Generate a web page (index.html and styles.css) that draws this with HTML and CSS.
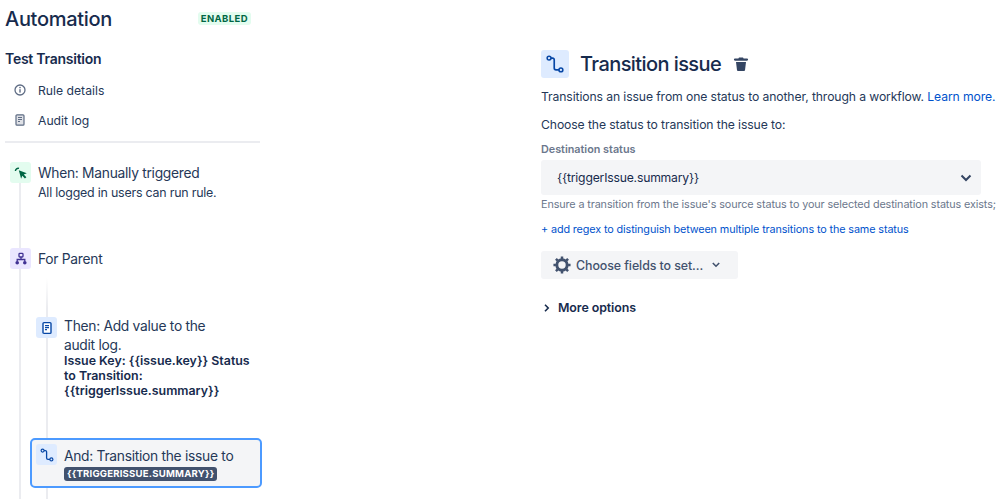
FILE: index.html
```html
<!DOCTYPE html>
<html lang="en">
<head>
    <meta charset="UTF-8">
    <title>Automation</title>
    <link rel="stylesheet" href="styles.css">
</head>
<body>
    <div class="page">
        <div class="sidebar">
            <div class="sidebar-head">
                <h1>Automation</h1>
                <span class="lozenge">ENABLED</span>
            </div>
            <h2>Test Transition</h2>
            <div class="nav-item">
                <svg class="nav-icon" viewBox="0 0 14 14"><circle cx="7" cy="7" r="5" fill="none" stroke="#5e6c84" stroke-width="1.3"/><rect x="6.3" y="6.2" width="1.4" height="3.4" fill="#5e6c84"/><circle cx="7" cy="4.6" r="0.8" fill="#5e6c84"/></svg>
                <span>Rule details</span>
            </div>
            <div class="nav-item">
                <svg class="nav-icon" viewBox="0 0 14 14"><rect x="3" y="1.8" width="8" height="10.4" rx="1" fill="#dfe1e6" stroke="#5e6c84" stroke-width="1.2"/><path d="M5 4.5h4M5 6.5h4M5 8.5h2" stroke="#5e6c84" stroke-width="1"/></svg>
                <span>Audit log</span>
            </div>
            <div class="divider"></div>

            <div class="timeline">
                <div class="step step-when">
                    <div class="step-icon icon-green">
                        <svg viewBox="0 0 14 14" width="14" height="14"><path d="M4.8 4.2l8 3-3 1.2 2.6 2.8-1.5 1.4-2.6-2.8-1.2 3z" fill="#006644"/><path d="M1.4 5a2.8 2.8 0 0 1 3.6-2.6" fill="none" stroke="#006644" stroke-width="1.4"/></svg>
                    </div>
                    <div class="step-text">
                        <div class="step-title">When: Manually triggered</div>
                        <div class="step-sub">All logged in users can run rule.</div>
                    </div>
                </div>

                <div class="step step-for">
                    <div class="step-icon icon-purple">
                        <svg viewBox="0 0 14 14" width="14" height="14"><rect x="5" y="1.4" width="4" height="3.6" rx="0.8" fill="none" stroke="#403294" stroke-width="1.3"/><path d="M7 5v2.5M3.2 9.4V7.5h7.6v1.9" fill="none" stroke="#403294" stroke-width="1.3"/><circle cx="3.2" cy="10.8" r="1.8" fill="#403294"/><circle cx="10.8" cy="10.8" r="1.8" fill="#403294"/></svg>
                    </div>
                    <div class="step-title">For Parent</div>
                </div>

                <div class="branch">
                    <div class="step step-then">
                        <div class="step-icon icon-blue">
                            <svg viewBox="0 0 14 14" width="14" height="14"><rect x="3" y="1.6" width="8" height="10.8" rx="1" fill="#fff" stroke="#0747a6" stroke-width="1.4"/><path d="M5 4.6h4M5 6.6h4M5 8.6h2" stroke="#0747a6" stroke-width="1.1"/></svg>
                        </div>
                        <div class="step-text">
                            <div class="step-title">Then: Add value to the audit log.</div>
                            <div class="step-bold">Issue Key: {{issue.key}} Status to Transition: {{triggerIssue.summary}}</div>
                        </div>
                    </div>

                    <div class="step step-and">
                        <div class="step-icon icon-blue">
                            <svg viewBox="0 0 14 14" width="14" height="14"><circle cx="2.6" cy="2.6" r="1.5" fill="none" stroke="#0747a6" stroke-width="1.2"/><circle cx="11.4" cy="11.4" r="1.5" fill="none" stroke="#0747a6" stroke-width="1.2"/><path d="M4 2.6h1.4a1.2 1.2 0 0 1 1.2 1.2v6.2a1.4 1.4 0 0 0 1.4 1.4h2" fill="none" stroke="#0747a6" stroke-width="1.3"/></svg>
                        </div>
                        <div class="step-text">
                            <div class="step-title">And: Transition the issue to</div>
                            <div class="tag">{{TRIGGERISSUE.SUMMARY}}</div>
                        </div>
                    </div>
                </div>
            </div>
        </div>

        <div class="content">
            <div class="content-head">
                <div class="head-icon">
                    <svg viewBox="0 0 14 14" width="18" height="18"><circle cx="2.4" cy="2.4" r="1.5" fill="none" stroke="#0747a6" stroke-width="1.2"/><circle cx="11.6" cy="11.6" r="1.5" fill="none" stroke="#0747a6" stroke-width="1.2"/><path d="M3.9 2.4h1.3a1.2 1.2 0 0 1 1.2 1.2v6.6a1.4 1.4 0 0 0 1.4 1.4h2.3" fill="none" stroke="#0747a6" stroke-width="1.3"/></svg>
                </div>
                <h2 class="content-title">Transition issue</h2>
                <svg class="trash" viewBox="0 0 16 16" width="16" height="16"><path d="M6 1.5h4l.6 1H14a.7.7 0 0 1 0 2.2H2a.7.7 0 0 1 0-2.2h3.4z" fill="#344563"/><path d="M3 6h10l-1 8.2a1 1 0 0 1-1 .8H5a1 1 0 0 1-1-.8z" fill="#344563"/></svg>
            </div>
            <p class="desc">Transitions an issue from one status to another, through a workflow. <a href="#">Learn more.</a></p>
            <p class="desc choose">Choose the status to transition the issue to:</p>
            <div class="field-label">Destination status</div>
            <div class="select">
                <span>{{triggerIssue.summary}}</span>
                <svg viewBox="0 0 12 8" width="12" height="8"><path d="M1.5 1.5L6 6l4.5-4.5" fill="none" stroke="#344563" stroke-width="2"/></svg>
            </div>
            <div class="hint">Ensure a transition from the issue's source status to your selected destination status exists;</div>
            <a class="regex" href="#">+ add regex to distinguish between multiple transitions to the same status</a>
            <div class="fields-btn">
                <svg viewBox="0 0 16 16" width="18" height="18"><circle cx="8" cy="8" r="4.6" fill="none" stroke="#42526e" stroke-width="2.6"/><path d="M8 .4v2.2M8 13.4v2.2M.4 8h2.2M13.4 8h2.2M2.6 2.6l1.6 1.6M11.8 11.8l1.6 1.6M2.6 13.4l1.6-1.6M11.8 4.2l1.6-1.6" stroke="#42526e" stroke-width="2.2"/></svg>
                <span>Choose fields to set...</span>
                <svg viewBox="0 0 10 7" width="8" height="6"><path d="M1 1l4 4 4-4" fill="none" stroke="#42526e" stroke-width="2"/></svg>
            </div>
            <div class="more">
                <svg viewBox="0 0 7 10" width="6" height="8"><path d="M1 1l4 4-4 4" fill="none" stroke="#172b4d" stroke-width="2"/></svg>
                <span>More options</span>
            </div>
        </div>
    </div>
</body>
</html>
```
FILE: styles.css
```css
/* General styles */
body {
    font-family: Inter, "Liberation Sans", sans-serif;
    margin: 0;
    padding: 0;
    background-color: #fff;
    color: #172b4d;
}

.page {
    display: flex;
    height: 499px;
    overflow: hidden;
}

/* Sidebar */
.sidebar {
    width: 255px;
    flex-shrink: 0;
    padding-left: 5px;
}

.sidebar-head {
    display: flex;
    align-items: center;
    justify-content: space-between;
    width: 246px;
    height: 38px;
}

.sidebar-head h1 {
    margin: 0;
    font-size: 20px;
    font-weight: 500;
    letter-spacing: -0.3px;
}

.lozenge {
    background: #e3fcef;
    color: #006644;
    font-size: 9.5px;
    font-weight: 700;
    letter-spacing: 0.4px;
    padding: 1px 3px 0;
    margin-bottom: 1px;
    border-radius: 3px;
    line-height: 12px;
}

.sidebar h2 {
    margin: 11px 0 6px;
    font-size: 14px;
    font-weight: 600;
    letter-spacing: -0.25px;
    line-height: 20px;
}

.nav-item {
    display: flex;
    align-items: center;
    gap: 11px;
    height: 30px;
    font-size: 12.2px;
    color: #253858;
    padding-left: 8px;
}

.nav-icon {
    width: 14px;
    height: 14px;
}

.divider {
    height: 2px;
    background: #ebecf0;
    margin-top: 6px;
}

/* Timeline */
.timeline {
    position: relative;
    padding-top: 19px;
}

.timeline::before {
    content: "";
    position: absolute;
    left: 14px;
    top: 30px;
    bottom: -200px;
    width: 2px;
    background: #ebecf0;
}

.step {
    position: relative;
    display: flex;
    gap: 7px;
}

.step-icon {
    width: 21px;
    height: 21px;
    flex-shrink: 0;
    display: flex;
    align-items: center;
    justify-content: center;
    border-radius: 3px;
}

.icon-green {
    background: #e3fcef;
}

.icon-purple {
    background: #eae6ff;
}

.icon-blue {
    background: #deebff;
}

.step-when,
.step-for {
    margin-left: 5px;
}

.step-when .step-text {
    padding-top: 1px;
}

.step-for {
    margin-top: 47px;
    align-items: center;
}

.step-title {
    font-size: 13.8px;
    letter-spacing: -0.28px;
    line-height: 20px;
    color: #253858;
}

.step-sub {
    font-size: 12.4px;
    letter-spacing: -0.2px;
    line-height: 17px;
    margin-top: 1px;
    color: #253858;
}

.step-bold {
    font-size: 12.4px;
    font-weight: 600;
    line-height: 15px;
    margin-top: -2px;
}

/* Nested actions */
.branch {
    position: relative;
    margin-left: 25px;
    padding-top: 48px;
}

.branch::before {
    content: "";
    position: absolute;
    left: 16px;
    top: 9px;
    bottom: -40px;
    width: 2px;
    background: linear-gradient(#fff, #ebecf0 30px);
}

.step-then {
    padding-left: 6px;
    width: 215px;
}

.step-then .step-title {
    line-height: 19px;
    max-width: 165px;
}

.step-and {
    margin-top: 40px;
    width: 232px;
    height: 50px;
    box-sizing: border-box;
    padding: 4px 4px;
    background: #f4f5f7;
    border: 2px solid #4c9aff;
    border-radius: 5px;
}

.step-and .step-text {
    padding-top: 2px;
}

.tag {
    width: fit-content;
    margin-top: 1px;
    background: #42526e;
    color: #fff;
    font-size: 9.6px;
    font-weight: 700;
    letter-spacing: 0.2px;
    line-height: 14px;
    padding: 0 3px;
    border-radius: 3px;
}

/* Right panel */
.content {
    margin-left: 281px;
    width: 458px;
    flex-shrink: 0;
    padding-top: 50px;
}

.content-head {
    display: flex;
    align-items: center;
    height: 28px;
}

.head-icon {
    width: 28px;
    height: 28px;
    background: #deebff;
    border-radius: 3px;
    display: flex;
    align-items: center;
    justify-content: center;
}

.content-title {
    margin: 0 12px 0 11px;
    font-size: 20px;
    font-weight: 500;
    letter-spacing: -0.58px;
}

.desc {
    margin: 10px 0 0;
    font-size: 12.2px;
    letter-spacing: -0.11px;
    line-height: 17px;
    color: #253858;
    white-space: nowrap;
}

.desc a {
    color: #0052cc;
    text-decoration: none;
}

.choose {
    margin-top: 11px;
}

.field-label {
    margin-top: 10px;
    font-size: 10.8px;
    font-weight: 600;
    line-height: 14px;
    color: #6b778c;
}

.select {
    display: flex;
    align-items: center;
    justify-content: space-between;
    width: 440px;
    height: 35px;
    box-sizing: border-box;
    margin-top: 3px;
    padding: 0 9px 0 16px;
    background: #f4f5f7;
    border-radius: 3px;
    font-size: 12.2px;
    letter-spacing: -0.2px;
}

.hint {
    margin-top: 3px;
    font-size: 10.8px;
    letter-spacing: -0.11px;
    line-height: 14px;
    color: #6b778c;
    white-space: nowrap;
}

.regex {
    display: block;
    margin-top: 11px;
    font-size: 10.8px;
    letter-spacing: -0.11px;
    line-height: 14px;
    color: #0052cc;
    text-decoration: none;
    white-space: nowrap;
}

.fields-btn {
    display: flex;
    align-items: center;
    gap: 5px;
    width: 197px;
    height: 28px;
    box-sizing: border-box;
    margin-top: 14px;
    padding-left: 12px;
    background: #f4f5f7;
    border-radius: 3px;
    font-size: 12.4px;
    letter-spacing: -0.08px;
    font-weight: 500;
    color: #42526e;
}

.fields-btn span {
    margin-right: 4px;
}

.more {
    display: flex;
    align-items: center;
    gap: 8px;
    margin-top: 21px;
    padding-left: 3px;
    font-size: 12.4px;
    letter-spacing: -0.08px;
    font-weight: 600;
    line-height: 16px;
}
```
